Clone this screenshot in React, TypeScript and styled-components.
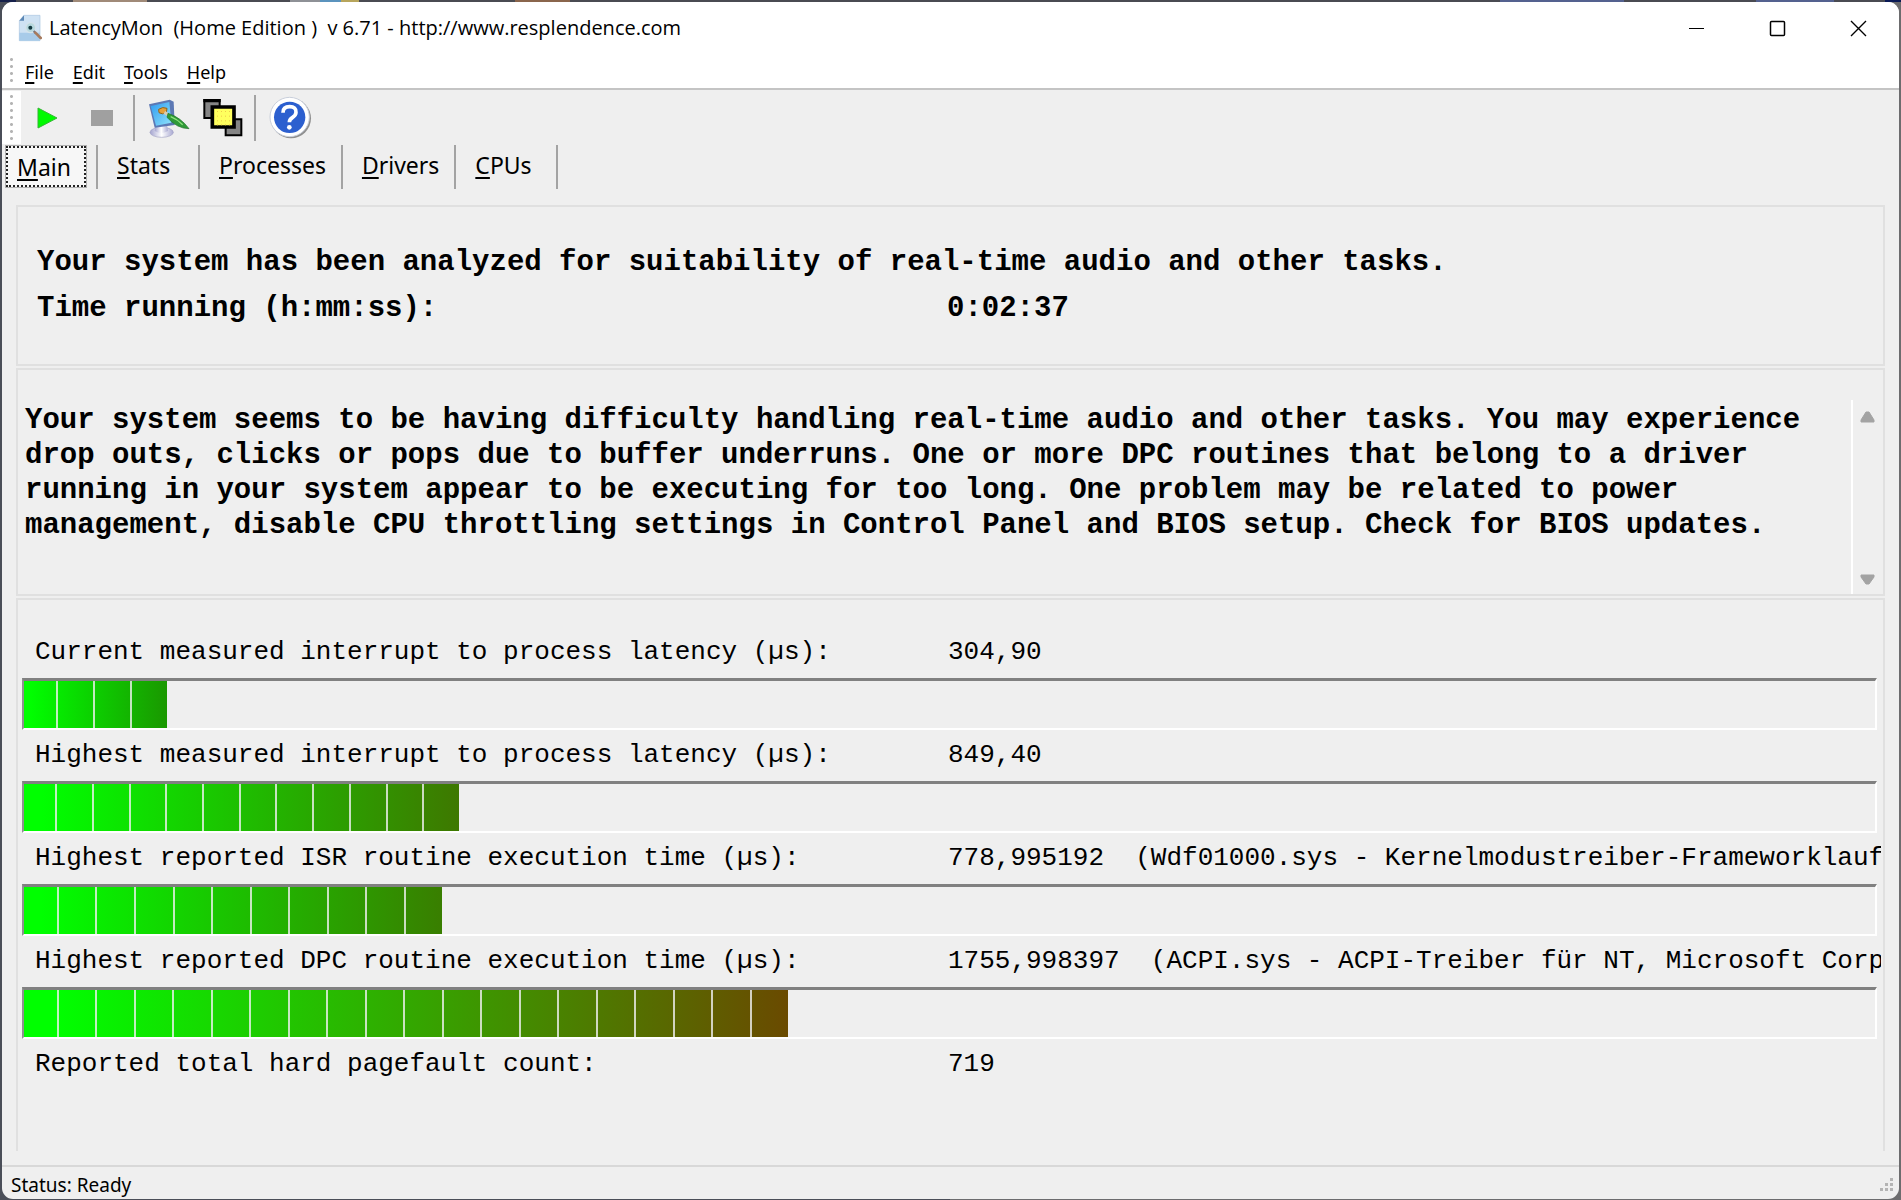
import React from "react";
import styled, { createGlobalStyle } from "styled-components";

const SANS = '"Open Sans", "Noto Sans", sans-serif';
const UI = '"Noto Sans", "Open Sans", sans-serif';
const MONO = '"Liberation Mono", "Courier New", monospace';

const GlobalStyle = createGlobalStyle`
  *, *::before, *::after { box-sizing: border-box; }
  body {
    margin: 0;
    background: #4a4e58;
    color: #000;
    font-family: ${SANS};
  }
  button {
    margin: 0;
    padding: 0;
    border: 0;
    background: none;
    color: inherit;
    font: inherit;
  }
  h1, h2, p, dl, dt, dd { margin: 0; font: inherit; }
  svg { display: block; }
  u { text-underline-offset: 3px; text-decoration-thickness: 2px; text-decoration-skip-ink: none; }
`;

const Desktop = styled.div`
  min-height: 100vh;
  display: flex;
  padding: 2px 2px 1px 2px;
  background:
    linear-gradient(90deg, #16204a 0 16px, #4a4b52 16px 73px, #a08a78 73px 147px, #4a4b52 147px 290px, #8e9196 290px 320px, #5b93bd 320px 341px, #b7a55c 341px 359px, #4a4b52 359px 515px, #8a654c 515px 570px, #4a4b52 570px 1500px, #54618f 1500px 1624px, #4a4b52 1624px 1756px, #54618f 1756px 1834px, #4a4b52 1834px 1885px, #0a1a55 1885px) top / 100% 2px no-repeat,
    linear-gradient(90deg, #4a4e58 50%, #6c6c6e 50%);
`;

const Window = styled.div`
  flex: 1;
  min-width: 0;
  display: flex;
  flex-direction: column;
  overflow: hidden;
  border-radius: 11px;
  background: #efefef;
`;

const TitleBar = styled.header`
  display: flex;
  align-items: center;
  height: 52px;
  padding-left: 16px;
  background: #fff;
`;

const Title = styled.h1`
  flex: 1;
  margin-left: 7px;
  font-size: 20px;
  line-height: 28px;
  white-space: pre;
`;

const CaptionButton = styled.button`
  display: grid;
  place-items: center;
  width: 81px;
  height: 50px;
`;

const Grip = styled.span`
  align-self: stretch;
  width: 3px;
  margin: 2px 0;
  background: radial-gradient(circle, #b4b4b4 1px, transparent 2px) 0 0 / 3px 7px;
`;

const MenuBar = styled.nav`
  display: flex;
  align-items: center;
  gap: 19px;
  height: 36px;
  padding-left: 8px;
  border-bottom: 2px solid #c4c4c4;
  background: #fff;
`;

const MenuGrip = styled(Grip)`
  margin-right: -7px;
`;

const MenuItem = styled.button`
  padding-top: 2px;
  font-family: ${UI};
  font-size: 18px;
  line-height: 28px;
`;

const ToolBar = styled.div`
  display: flex;
  align-items: center;
  height: 54px;
  padding-top: 1px;
`;

const ToolGrip = styled.div`
  display: flex;
  align-self: stretch;
  width: 19px;
  padding-left: 8px;
  background: #fff;
`;

const ToolButton = styled.button`
  display: grid;
  place-items: center;
  width: 54px;
  height: 46px;
`;

const ToolDivider = styled.span`
  width: 2px;
  height: 46px;
  margin: 0 7px 0 4px;
  background: #a3a3a3;
`;

const TabList = styled.div`
  display: flex;
  height: 45px;
  padding: 1px 4px 0;
  font-family: ${UI};
  font-size: 23px;
  line-height: 36px;
`;

const Tab = styled.button`
  min-width: 102px;
  padding: 0 15px 4px 19px;
  border-right: 2px solid #a3a3a3;
  text-align: left;
`;

const ActiveTabSlot = styled.div`
  display: flex;
  width: 92px;
  padding: 1px 10px 2px 0;
  border-right: 2px solid #a3a3a3;
`;

const ActiveTab = styled.button`
  flex: 1;
  padding-left: 9px;
  border: 2px dotted #222;
  outline: 1px solid #b0b0b0;
  background: #f7f7f7;
  text-align: left;
`;

const Content = styled.main`
  flex: 1;
  display: flex;
  flex-direction: column;
  gap: 2px;
  padding: 16px 14px 14px;
`;

const Panel = styled.section`
  border: 2px solid #e0e0e0;
`;

const Summary = styled(Panel)`
  height: 161px;
  padding: 33px 19px 0;
  font: bold 29px/46px ${MONO};
`;

const SummaryRow = styled.div`
  display: grid;
  grid-template-columns: 910px 1fr;
  white-space: nowrap;
`;

const Verdict = styled(Panel)`
  display: flex;
  align-items: stretch;
  height: 228px;
  padding-top: 30px;
`;

const VerdictText = styled.p`
  flex: 1;
  padding: 3px 0 0 7px;
  font: bold 29px/35px ${MONO};
`;

const ScrollBar = styled.div`
  display: flex;
  flex-direction: column;
  justify-content: space-between;
  width: 32px;
  padding: 11px 8px 8px 7px;
  border-left: 2px solid #fff;
`;

const Metrics = styled(Panel)`
  flex: 1;
  padding: 27px 2px 0 4px;
  border-bottom: 0;
  font: 26px/51px ${MONO};
`;

const MetricHead = styled.div`
  display: grid;
  grid-template-columns: 913px minmax(0, 1fr);
  padding-left: 13px;
  height: 51px;
  line-height: 50px;
  overflow: hidden;
  white-space: pre;
`;

const Value = styled.span`
  overflow: hidden;
`;

const Track = styled.div`
  height: 52px;
  margin-right: 4px;
  border: 2px solid #fff;
  border-top: 3px solid #808080;
  border-left-color: #909090;
`;

const Fill = styled.div<{ $end: string }>`
  display: flex;
  height: 100%;
  background: linear-gradient(90deg, #00ff00 4%, ${(p) => p.$end});
`;

const Segment = styled.span`
  flex: 10;
  border-right: 2px solid rgba(240, 240, 240, 0.8);
  &:first-child { flex: 9; }
  &:last-child { border-right: 0; }
`;

const StatusBar = styled.footer`
  display: flex;
  align-items: center;
  justify-content: space-between;
  height: 34px;
  padding: 3px 4px 0 9px;
  border-top: 2px solid #d8d8d8;
  font-family: ${UI};
  font-size: 19px;
  line-height: 28px;
`;

const AppIcon = () => (
  <svg width="24" height="28" viewBox="54 36 72 84" aria-hidden="true">
    <path d="M72 40h48v76H58V56z" fill="#cfe2f3" stroke="#a9c6df" strokeWidth="2" />
    <path d="M72 40v16H58z" fill="#5b87b5" />
    <path d="M58 92h62v24H58z" fill="#a8cbe9" />
    <circle cx="92" cy="77" r="15" fill="#b7d8de" stroke="#d5e2ea" strokeWidth="4" />
    <circle cx="91" cy="77" r="6" fill="#143a40" />
    <path d="M101 87l5 6" stroke="#6e7480" strokeWidth="6" />
    <path d="M106 92l16 16" stroke="#a77a5d" strokeWidth="8" strokeLinecap="round" />
  </svg>
);

const DisplayIcon = () => (
  <svg width="42" height="42" viewBox="24 6 126 126" aria-hidden="true">
    <defs>
      <linearGradient id="screen" x1="0" y1="0" x2="1" y2="1">
        <stop offset="0" stopColor="#2e9bf0" />
        <stop offset="1" stopColor="#8fe2fb" />
      </linearGradient>
      <linearGradient id="stand" x1="0" y1="0" x2="1" y2="0">
        <stop offset="0" stopColor="#a3a3cf" />
        <stop offset=".5" stopColor="#fff" />
        <stop offset="1" stopColor="#a9a9d2" />
      </linearGradient>
    </defs>
    <ellipse cx="65" cy="112" rx="35" ry="15" fill="url(#stand)" stroke="#a3a3c6" strokeWidth="2" />
    <path d="M48 84h32l4 24q-20 12-40 0z" fill="url(#stand)" />
    <path d="M27 28l62-14 12 6 3 70-60 8z" fill="#5c78b4" />
    <path d="M32 33l56-12 6 62-46 9z" fill="url(#screen)" />
    <path d="M56 43q12-9 25-3l-2 13q-12 7-22 0z" fill="#e5a13a" stroke="#8e641b" strokeWidth="3" />
    <path d="M73 52l16 10" stroke="#d9ccb0" strokeWidth="10" />
    <path d="M84 55q38 12 63 46-36 0-66-34z" fill="#2f9a38" stroke="#1f7128" strokeWidth="2" />
    <path d="M92 65q20 8 36 24" stroke="#8ee37c" strokeWidth="4" fill="none" />
  </svg>
);

const LayersIcon = () => (
  <svg width="40" height="40" viewBox="198 15 120 120" aria-hidden="true">
    <path d="M202 21h46v54h-46z" fill="#858585" stroke="#000" strokeWidth="6" />
    <path d="M199 18h52v10h-52z" />
    <path d="M266 79h47v48h-47z" fill="#858585" stroke="#000" strokeWidth="6" />
    <path d="M226 42h65v60h-65z" fill="#ffff5e" stroke="#000" strokeWidth="11" />
    <g fill="#eec94a">
      {[54, 68, 82, 94].map((y) => [240, 252, 264, 276].map((x) => <rect key={`${x}-${y}`} x={x} y={y} width="3" height="3" />))}
    </g>
  </svg>
);

const HelpIcon = () => (
  <svg width="43" height="43" viewBox="393 12 129 129" aria-hidden="true">
    <circle cx="459" cy="79" r="60" fill="#8f8f8f" />
    <circle cx="455" cy="75" r="59" fill="#fff" stroke="#c9cfdb" strokeWidth="3" />
    <circle cx="455" cy="76" r="47" fill="#2c5fcf" />
    <path d="M435 62q0-18 20-18t19 17q0 9-11 16-9 6-9 14" fill="none" stroke="#fff" strokeWidth="11" />
    <circle cx="454" cy="106" r="7" fill="#fff" />
  </svg>
);

const Arrow = ({ down = false }: { down?: boolean }) => (
  <svg width="15" height="12" viewBox="0 0 15 12" aria-hidden="true">
    <path d={down ? "M1 1h13v2l-5 7h-3l-5-7z" : "M6 1h3l5 8v2h-13v-2z"} fill="#a3a3a3" stroke="#a3a3a3" strokeLinejoin="round" />
  </svg>
);

const MENU = ["File", "Edit", "Tools", "Help"];
const TABS = ["Stats", "Processes", "Drivers", "CPUs"];

const METRICS = [
  { label: "Current measured interrupt to process latency (µs):", value: "304,90", fill: 7.7, segments: 4, end: "#1a9800" },
  { label: "Highest measured interrupt to process latency (µs):", value: "849,40", fill: 23.5, segments: 12, end: "#3e7800" },
  { label: "Highest reported ISR routine execution time (µs):", value: "778,995192  (Wdf01000.sys - Kernelmodustreiber-Frameworklaufzeit, Microsoft Corporation)", fill: 22.6, segments: 11, end: "#397e00" },
  { label: "Highest reported DPC routine execution time (µs):", value: "1755,998397  (ACPI.sys - ACPI-Treiber für NT, Microsoft Corporation)", fill: 41.3, segments: 20, end: "#6a4a00" },
];

const Mnemonic = ({ text }: { text: string }) => (
  <>
    <u>{text[0]}</u>
    {text.slice(1)}
  </>
);

export default function App() {
  return (
    <Desktop>
      <GlobalStyle />
      <Window>
        <TitleBar>
          <AppIcon />
          <Title>{"LatencyMon  (Home Edition )  v 6.71 - http://www.resplendence.com"}</Title>
          <CaptionButton aria-label="Minimize">
            <svg width="17" height="17"><path d="M1 8.5h15" stroke="#000" /></svg>
          </CaptionButton>
          <CaptionButton aria-label="Maximize">
            <svg width="17" height="17"><rect x="1.5" y="1.5" width="14" height="14" rx="1" fill="none" stroke="#000" strokeWidth="1.5" /></svg>
          </CaptionButton>
          <CaptionButton aria-label="Close">
            <svg width="17" height="17"><path d="M1 1l15 15M16 1L1 16" stroke="#000" strokeWidth="1.4" /></svg>
          </CaptionButton>
        </TitleBar>

        <MenuBar>
          <MenuGrip />
          {MENU.map((item) => (
            <MenuItem key={item}><Mnemonic text={item} /></MenuItem>
          ))}
        </MenuBar>

        <ToolBar role="toolbar" aria-label="Monitor">
          <ToolGrip><Grip /></ToolGrip>
          <ToolButton aria-label="Start">
            <svg width="22" height="22"><path d="M1 1l19 10L1 21z" fill="#00fa00" stroke="#35b535" /></svg>
          </ToolButton>
          <ToolButton aria-label="Stop">
            <svg width="22" height="16"><path d="M0 0h22v16H0z" fill="#a0a0a0" /></svg>
          </ToolButton>
          <ToolDivider />
          <ToolButton aria-label="Display options"><DisplayIcon /></ToolButton>
          <ToolButton aria-label="Windows"><LayersIcon /></ToolButton>
          <ToolDivider />
          <ToolButton aria-label="Help"><HelpIcon /></ToolButton>
        </ToolBar>

        <TabList role="tablist">
          <ActiveTabSlot>
            <ActiveTab role="tab" aria-selected="true"><Mnemonic text="Main" /></ActiveTab>
          </ActiveTabSlot>
          {TABS.map((tab) => (
            <Tab key={tab} role="tab" aria-selected="false"><Mnemonic text={tab} /></Tab>
          ))}
        </TabList>

        <Content>
          <Summary>
            <p>Your system has been analyzed for suitability of real-time audio and other tasks.</p>
            <SummaryRow>
              <span>Time running (h:mm:ss):</span>
              <span>0:02:37</span>
            </SummaryRow>
          </Summary>

          <Verdict>
            <VerdictText>
              Your system seems to be having difficulty handling real-time audio and other tasks. You may experience drop
              outs, clicks or pops due to buffer underruns. One or more DPC routines that belong to a driver running in
              your system appear to be executing for too long. One problem may be related to power management, disable CPU
              throttling settings in Control Panel and BIOS setup. Check for BIOS updates.
            </VerdictText>
            <ScrollBar>
              <button aria-label="Scroll up"><Arrow /></button>
              <button aria-label="Scroll down"><Arrow down /></button>
            </ScrollBar>
          </Verdict>

          <Metrics>
            {METRICS.map((m) => (
              <React.Fragment key={m.label}>
                <MetricHead>
                  <span>{m.label}</span>
                  <Value>{m.value}</Value>
                </MetricHead>
                <Track role="meter" aria-label={m.label} aria-valuenow={m.fill}>
                  <Fill $end={m.end} style={{ width: `${m.fill}%` }}>
                    {Array.from({ length: m.segments }, (_, i) => <Segment key={i} />)}
                  </Fill>
                </Track>
              </React.Fragment>
            ))}
            <MetricHead>
              <span>Reported total hard pagefault count:</span>
              <Value>719</Value>
            </MetricHead>
          </Metrics>
        </Content>

        <StatusBar>
          <span>Status: Ready</span>
          <svg width="16" height="16" aria-hidden="true">
            <path d="M11 1h3v3h-3zM6 6h3v3H6zM11 6h3v3h-3zM1 11h3v3H1zM6 11h3v3H6zM11 11h3v3h-3z" fill="#b4b4b4" />
          </svg>
        </StatusBar>
      </Window>
    </Desktop>
  );
}
